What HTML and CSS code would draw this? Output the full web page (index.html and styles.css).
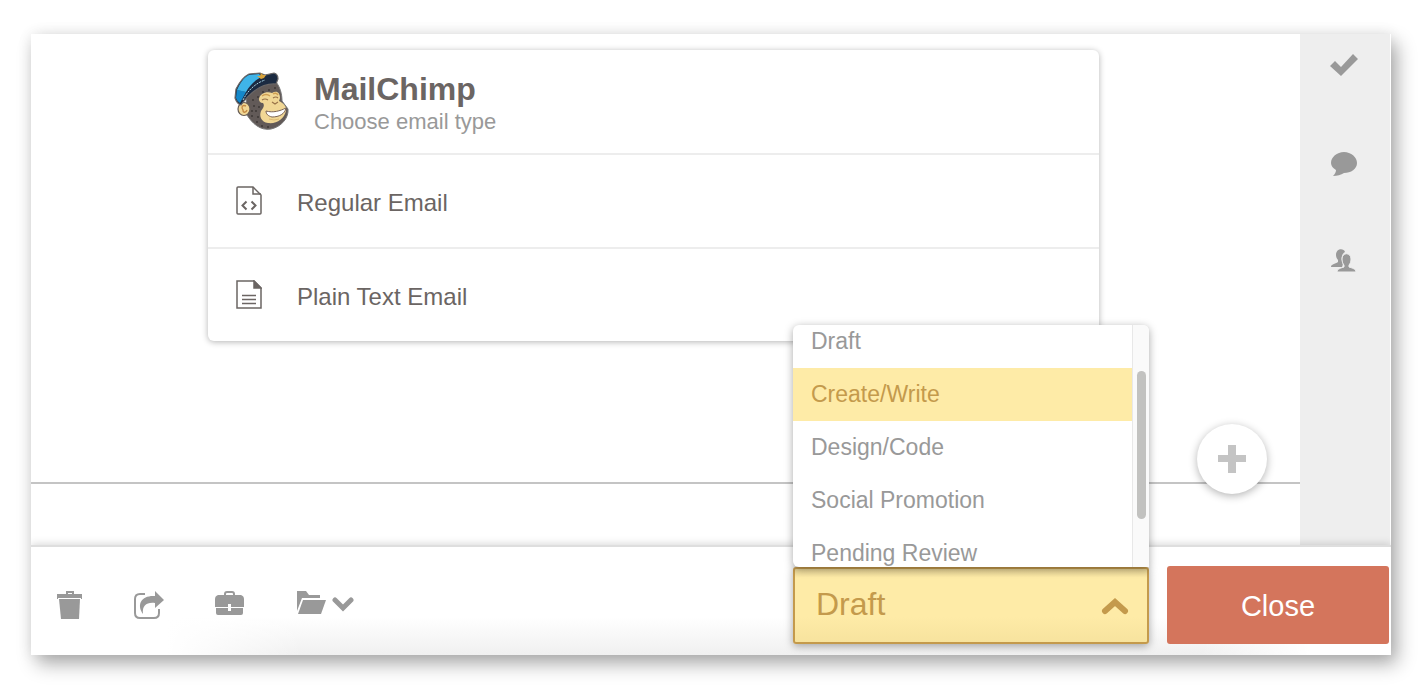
FILE: index.html
```html
<!DOCTYPE html>
<html lang="en">
<head>
  <title>MailChimp Email</title>
  <meta charset="UTF-8">
  <meta name="viewport" content="width=device-width, initial-scale=1.0">
  <link rel="stylesheet" href="styles.css">
</head>
<body>
  <div class="window">
    <div class="workspace">
      <main class="editor">
        <section class="card">
          <header class="card-header">
            <svg class="logo" viewBox="0 0 56 60" aria-hidden="true">
              <!-- head -->
              <path d="M12 23C17 14 31 6 42 10C46 15 48 22 48 29L54 37C55 46 47 55 37 57C26 59 18 51 13 43Z" fill="#625a58" stroke="#777" stroke-width="1"/>
              <g fill="#24201f">
                <circle cx="19" cy="28" r="0.8"/><circle cx="24" cy="25" r="0.8"/><circle cx="20" cy="34" r="0.8"/><circle cx="25" cy="35" r="0.8"/><circle cx="22" cy="39" r="0.8"/><circle cx="18" cy="44" r="0.8"/><circle cx="24" cy="45" r="0.8"/><circle cx="23" cy="50" r="0.8"/><circle cx="28" cy="54" r="0.8"/><circle cx="29" cy="20" r="0.8"/><circle cx="35" cy="18" r="0.8"/><circle cx="41" cy="16" r="0.8"/><circle cx="18" cy="39" r="0.8"/><circle cx="34" cy="55" r="0.8"/>
              </g>
              <!-- face -->
              <path d="M25 27C26 21 33 19 38 21C43 18 46 21 46 26L45 29C49 31 53 34 52 39C50 47 43 52 34 51C27 50 25 44 27 39C29 36 31 34 29 31C26 31 25 29 25 27Z" fill="#f1d795"/>
              <path d="M28 24Q32 21 36 24M39 22Q42 20 44 23" fill="none" stroke="#cf9e52" stroke-width="1.5"/>
              <path d="M28 28Q31 26 34 28M39 26Q42 24 44 26M38 30L41 32L44 30" fill="none" stroke="#9a744a" stroke-width="1.2"/>
              <path d="M32 39C39 41 46 39 52 36C51 42 45 45 38 45C34 44 32 42 32 39Z" fill="#fff" stroke="#7b6455" stroke-width="1"/>
              <path d="M35 47Q40 49 45 47" fill="none" stroke="#dcb972" stroke-width="1"/>
              <!-- ear -->
              <ellipse cx="10" cy="37" rx="6" ry="6.500" fill="#f1d795" stroke="#665b53" stroke-width="1.200"/>
              <path d="M12 34C8 32 7 36 9 38C9 41 12 41 13 38" fill="none" stroke="#c58a43" stroke-width="1.400"/>
              <!-- cap -->
              <path d="M1 26L2 17C5 11 9 5 15 2L26 1L31 3L40 1Q44 2 44 7L42 12C30 11 18 18 7 33Q3 32 1 26Z" fill="#1b2a41" stroke="#6a6767" stroke-width="1.200"/>
              <path d="M2 26L3 18L8 19L12 20L6 31Q3 29 2 26Z" fill="#1488ca"/>
              <path d="M3 18C6 11 10 5 15 3L25 2L28 5C22 7 16 13 12 20Z" fill="#3fb4e8"/>
              <path d="M9 28C14 18 22 11 31 8" fill="none" stroke="#a9d5e6" stroke-width="1" stroke-dasharray="2 1"/>
              <path d="M23 4L26 4L27 1L29 3L32 3L30 6L27 7Z" fill="#d8a33b"/>
            </svg>
            <div>
              <h1 class="card-title">MailChimp</h1>
              <p class="card-subtitle">Choose email type</p>
            </div>
          </header>
          <a class="email-type" href="#regular">
            <svg width="26" height="30" viewBox="0 0 26 30" fill="none" stroke="#6b6563" stroke-width="1.500" aria-hidden="true">
              <path d="M2 1H17L25 9V27Q25 28 24 28H2Q1 28 1 27V2Q1 1 2 1Z"/>
              <path d="M17 1V8H25"/>
              <path d="M10.500 15.500L6.500 19.500L10.500 23.500M15.500 15.500L19.500 19.500L15.500 23.500" stroke-width="2"/>
            </svg>
            <span>Regular Email</span>
          </a>
          <a class="email-type" href="#plain">
            <svg width="26" height="30" viewBox="0 0 26 30" fill="none" stroke="#6b6563" stroke-width="1.500" aria-hidden="true">
              <path d="M1 1H18L25 8V28H1Z"/>
              <path d="M18 1V8H25Z" fill="#6b6563"/>
              <path d="M6 15.500H20M6 19.500H20M6 23.500H20"/>
            </svg>
            <span>Plain Text Email</span>
          </a>
        </section>
        <div class="timeline">
          <button class="add-btn" type="button" aria-label="Add">
            <svg width="30" height="30" viewBox="0 0 30 30" aria-hidden="true"><path d="M11 1H19V11H29V18H19V29H11V18H1V11H11Z" fill="#c4c4c4"/></svg>
          </button>
        </div>
      </main>
      <nav class="sidebar">
        <button class="icon-btn" type="button" aria-label="Tasks">
          <svg width="28" height="28" viewBox="0 0 28 28" aria-hidden="true"><path d="M0 14L5 9L11 15L23 2L28 7L11 24Z"/></svg>
        </button>
        <button class="icon-btn" type="button" aria-label="Comments">
          <svg width="28" height="28" viewBox="0 0 28 28" aria-hidden="true"><path d="M14 2C21 2 27 7 27 13C27 19 21 23 14 23C11 25 7 26 3 26C5 24 6 22 6 20C3 18 1 16 1 13C1 7 7 2 14 2Z"/></svg>
        </button>
        <button class="icon-btn" type="button" aria-label="Team">
          <svg width="28" height="28" viewBox="0 0 28 28" aria-hidden="true">
            <path d="M6 7C6 0 14 0 15 4C12 6 11 9 12 13C13 15 13 17 12 19H1C1 16 5 16 8 14V12C7 11 6 9 6 7Z"/>
            <path d="M12 11C12 4 21 4 21 11C21 14 20 16 19 17V19C22 20 26 21 26 24H7C7 21 11 20 14 19V17C13 16 12 14 12 11Z" stroke="#eee" stroke-width="1"/>
          </svg>
        </button>
      </nav>
    </div>

    <footer class="toolbar">
      <div class="tools">
        <button class="icon-btn" type="button" aria-label="Delete">
          <svg width="26" height="30" viewBox="0 0 26 30" aria-hidden="true"><path d="M0 4H9V1H17V4H25V9H24V8H1V9H0ZM11 3V4H15V3Z" fill-rule="evenodd"/><path d="M2 9H23L22 29H4Z"/></svg>
        </button>
        <button class="icon-btn" type="button" aria-label="Share">
          <svg width="30" height="30" viewBox="0 0 30 30" aria-hidden="true">
            <path d="M11 4H6Q1 4 1 9V23Q1 28 6 28H20Q25 28 25 23V19" fill="none" stroke="#999" stroke-width="2"/>
            <path d="M21 1L30 10L21 18V13C13 12 8 15 9 24C2 14 8 5 21 6Z"/>
          </svg>
        </button>
        <button class="icon-btn" type="button" aria-label="Briefcase">
          <svg width="30" height="30" viewBox="0 0 30 30" aria-hidden="true">
            <path d="M10 6V4Q10 2 12 2H17Q19 2 19 4V6" fill="none" stroke="#999" stroke-width="2"/>
            <path d="M3 5H26Q29 6 29 9V17H16V14H13V17H0V9Q0 6 3 5ZM1 18H13V21H16V18H28V23Q28 25 26 25H3Q1 25 1 23Z"/>
          </svg>
        </button>
        <button class="icon-btn folder-btn" type="button" aria-label="Folders">
          <svg width="30" height="30" viewBox="0 0 30 30" aria-hidden="true"><path d="M1 1H10L13 5H24V8H6L1 21Z"/><path d="M7 10H30L25 24H2Z"/></svg>
          <svg width="22" height="30" viewBox="0 0 22 30" aria-hidden="true"><path d="M3 10L11 18L19 10" fill="none" stroke="#999" stroke-width="5" stroke-linecap="round"/></svg>
        </button>
      </div>

      <div class="status">
        <div class="status-menu">
          <ul class="status-list">
            <li>Draft</li>
            <li class="active">Create/Write</li>
            <li>Design/Code</li>
            <li>Social Promotion</li>
            <li>Pending Review</li>
          </ul>
          <div class="scroll-track"><div class="scroll-thumb"></div></div>
        </div>
        <select class="status-select" aria-label="Status">
          <option>Draft</option>
          <option>Create/Write</option>
          <option>Design/Code</option>
          <option>Social Promotion</option>
          <option>Pending Review</option>
        </select>
        <svg class="status-arrow" width="28" height="18" viewBox="0 0 28 18" aria-hidden="true"><path d="M4 14L14 5L24 14" fill="none" stroke="#c49a4c" stroke-width="6" stroke-linecap="round"/></svg>
      </div>
      <button class="close-btn" type="button">Close</button>
    </footer>
  </div>
</body>
</html>
```

FILE: styles.css
```css
:root {
  --text: #6b6563;
  --gray: #999;
  --line: #ededed;
  --sidebar: #eee;
  --yellow: #feeba7;
  --gold: #c49a4c;
  --red: #d4755c;
}

* {
  margin: 0;
  padding: 0;
  box-sizing: border-box;
  font-family: 'Liberation Sans', Arial, sans-serif;
}

body {
  display: flex;
  min-height: 100vh;
  padding: 34px 37px 44px 31px;
  background: #fff;
  color: var(--text);
}

button {
  border: none;
  background: none;
  cursor: pointer;
}

.window {
  display: flex;
  flex: 1;
  flex-direction: column;
  background: #fff;
  box-shadow: 6px 9px 18px rgba(0, 0, 0, 0.32), 0 0 14px rgba(0, 0, 0, 0.08);
}

.workspace {
  display: flex;
  flex: 1;
}

.editor {
  display: flex;
  flex: 1;
  flex-direction: column;
  justify-content: space-between;
  padding-top: 16px;
}

/* Email type card */
.card {
  margin: 0 201px 0 177px;
  border-radius: 6px;
  background: #fff;
  box-shadow: 0 1px 6px rgba(0, 0, 0, 0.3);
}

.card-header {
  display: flex;
  align-items: center;
  gap: 24px;
  height: 103px;
  padding: 0 26px;
}

.logo {
  width: 56px;
  height: 60px;
}

.card-title {
  padding-top: 4px;
  font-size: 32px;
  line-height: 36px;
}

.card-subtitle {
  color: var(--gray);
  font-size: 22px;
  line-height: 30px;
}

.email-type {
  display: flex;
  align-items: center;
  gap: 35px;
  height: 94px;
  padding: 4px 28px 0;
  border-top: 2px solid var(--line);
  color: var(--text);
  font-size: 24px;
  text-decoration: none;
}

.email-type svg {
  margin-bottom: 4px;
}

.timeline {
  position: relative;
  height: 65px;
  border-top: 2px solid #c4c4c4;
}

.add-btn {
  position: absolute;
  top: -60px;
  right: 33px;
  display: flex;
  align-items: center;
  justify-content: center;
  width: 70px;
  height: 70px;
  border-radius: 50%;
  background: #fff;
  box-shadow: 0 2px 8px rgba(0, 0, 0, 0.3);
}

.sidebar {
  display: flex;
  flex-direction: column;
  align-items: center;
  gap: 70px;
  width: 91px;
  padding: 18px 2px 0 0;
  border-right: 1px solid #fff;
  background: var(--sidebar);
}

.icon-btn {
  display: flex;
  fill: var(--gray);
}

/* Bottom toolbar */
.toolbar {
  position: relative;
  display: flex;
  align-items: center;
  gap: 18px;
  height: 108px;
  padding: 8px 2px 0 26px;
  background:
    linear-gradient(90deg, #fff 10%, transparent 20%, transparent 86%, #fff 94%),
    linear-gradient(180deg, #fff 65%, #f0f0f0);
  box-shadow: 0 -1px 0 1px #dedede, 0 -3px 8px rgba(0, 0, 0, 0.16);
  clip-path: inset(-300px 0 0 0);
}

.tools {
  display: flex;
  flex: 1;
  gap: 51px;
}

.folder-btn {
  gap: 6px;
}

.status {
  position: relative;
  width: 356px;
  height: 77px;
}

.status-select {
  width: 100%;
  height: 100%;
  padding: 0 21px 2px;
  border: 2px solid var(--gold);
  border-radius: 3px;
  appearance: none;
  background: linear-gradient(180deg, #e3d092, #feeba7 12%, #feeba7 65%, #f7e39e);
  box-shadow: 0 2px 8px rgba(0, 0, 0, 0.35);
  color: var(--gold);
  font-size: 32px;
}

.status-arrow {
  position: absolute;
  top: 30px;
  right: 20px;
  pointer-events: none;
}

.status-menu {
  position: absolute;
  bottom: 100%;
  left: 0;
  display: flex;
  width: 100%;
  height: 242px;
  border-radius: 6px 6px 0 6px;
  background: #fff;
  box-shadow: 0 2px 8px rgba(0, 0, 0, 0.35);
  overflow: hidden;
}

/* the list is scrolled down a little */
.status-list {
  flex: 1;
  margin-top: -10px;
  list-style: none;
}

.status-list li {
  height: 53px;
  padding-left: 18px;
  color: var(--gray);
  font-size: 23px;
  line-height: 53px;
}

.status-list .active {
  background: var(--yellow);
  color: var(--gold);
}

.scroll-track {
  width: 17px;
  padding: 46px 3px 0 4px;
  border-left: 1px solid #e8e8e8;
  background: #fafafa;
}

.scroll-thumb {
  height: 148px;
  border-radius: 5px;
  background: #c2c2c0;
}

.close-btn {
  width: 222px;
  height: 78px;
  padding-top: 2px;
  border-radius: 3px;
  background: var(--red);
  color: #fff;
  font-size: 29px;
}
```
